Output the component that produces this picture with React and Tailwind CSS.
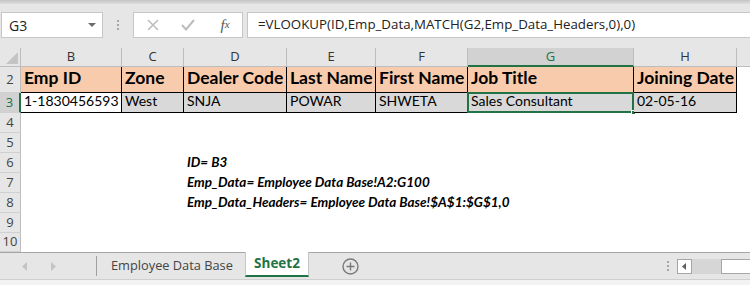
import React from 'react';

const ui = { fontFamily: '"Open Sans", "Noto Sans", sans-serif' };
const cell = { fontFamily: 'Lato, "Liberation Sans", sans-serif' };

const cols = [
  { key: 'B', w: 'w-[101px]', head: 'Emp ID', val: '1-1830456593' },
  { key: 'C', w: 'w-[62px]', head: 'Zone', val: 'West' },
  { key: 'D', w: 'w-[103px]', head: 'Dealer Code', val: 'SNJA' },
  { key: 'E', w: 'w-[89px]', head: 'Last Name', val: 'POWAR' },
  { key: 'F', w: 'w-[92px]', head: 'First Name', val: 'SHWETA' },
  { key: 'G', w: 'w-[166px]', head: 'Job Title', val: 'Sales Consultant' },
  { key: 'H', w: 'w-[103px]', head: 'Joining Date', val: '02-05-16' },
];

const notes = {
  6: 'ID= B3',
  7: 'Emp_Data= Employee Data Base!A2:G100',
  8: 'Emp_Data_Headers= Employee Data Base!$A$1:$G$1,0',
};

const RowHead = ({ n, active, h = 'h-[20px]' }) => (
  <div
    className={`w-[21px] shrink-0 ${h} flex items-center justify-center text-[13px] border-b border-[#d0d0d0] ${
      active ? 'bg-[#d2d2d2] text-[#217346] border-r-2 border-r-[#217346]' : 'bg-[#e6e6e6] text-[#444] border-r border-r-[#bdbdbd]'
    }`}
    style={ui}
  >
    {n}
  </div>
);

const FormulaBar = () => (
  <div className="bg-[#e6e6e6]">
    <div className="h-[4px] bg-gradient-to-b from-[#c4c4c4] to-[#dedede]" />
    <div className="h-[44px] flex items-start pt-[8px]" style={ui}>
      <div className="ml-[1px] w-[102px] h-[26px] bg-white border border-[#c6c6c6] flex items-center pl-[7px] pr-[6px] text-[14px] text-[#222]">
        <span className="flex-1">G3</span>
        <svg width="8" height="5" viewBox="0 0 8 5"><path d="M0 0h8L4 4z" fill="#6b6b6b" /></svg>
      </div>
      <div className="w-[30px] h-[26px] flex flex-col items-center justify-center gap-[2px]">
        <span className="w-[2px] h-[2px] bg-[#a6a6a6]" />
        <span className="w-[2px] h-[2px] bg-[#a6a6a6]" />
        <span className="w-[2px] h-[2px] bg-[#a6a6a6]" />
      </div>
      <div className="w-[110px] h-[26px] bg-white border border-[#c6c6c6] flex items-center">
        <div className="w-[37px] flex justify-center">
          <svg width="12" height="12" viewBox="0 0 12 12"><path d="M1 1l10 10M11 1L1 11" stroke="#bdbdbd" strokeWidth="1.6" /></svg>
        </div>
        <div className="w-[33px] flex justify-center">
          <svg width="14" height="12" viewBox="0 0 14 12"><path d="M1 6l4 4.5L13 1" stroke="#bdbdbd" strokeWidth="2" fill="none" /></svg>
        </div>
        <div className="flex-1 flex justify-center pl-[4px] text-[15px] italic text-[#555]" style={{ fontFamily: '"Liberation Serif", serif' }}>
          f<span className="text-[11px] translate-y-[2px]">x</span>
        </div>
      </div>
      <div className="ml-[4px] flex-1 h-[26px] bg-white border border-[#c6c6c6] border-r-0 flex items-center pl-[10px] text-[13.3px] text-[#222] whitespace-nowrap overflow-hidden">
        =VLOOKUP(ID,Emp_Data,MATCH(G2,Emp_Data_Headers,0),0)
      </div>
    </div>
  </div>
);

const ColumnHeaders = () => (
  <div className="flex h-[19px]" style={ui}>
    <div className="w-[21px] shrink-0 bg-[#e6e6e6] border-r border-b border-[#bdbdbd] flex items-end justify-end pr-[2px] pb-[2px]">
      <svg width="12" height="12" viewBox="0 0 12 12"><path d="M12 0v12H0z" fill="#c4c4c4" /></svg>
    </div>
    {cols.map((c) => (
      <div
        key={c.key}
        className={`${c.w} shrink-0 flex items-center justify-center text-[13px] border-r border-[#bdbdbd] ${
          c.key === 'G' ? 'bg-[#d2d2d2] text-[#217346] border-b-2 border-b-[#217346]' : 'bg-[#e6e6e6] text-[#333] border-b border-b-[#bdbdbd]'
        }`}
      >
        {c.key}
      </div>
    ))}
    <div className="flex-1 bg-[#e6e6e6] border-b border-[#bdbdbd]" />
  </div>
);

const Grid = () => (
  <div className="bg-white" style={cell}>
    <div className="flex h-[26px]">
      <RowHead n={2} h="h-[26px]" />
      {cols.map((c) => (
        <div
          key={c.key}
          className={`${c.w} shrink-0 bg-[#f8cbad] border-r border-b border-black flex items-end pl-[3px] pb-[1px] text-[17.5px] font-bold text-black whitespace-nowrap overflow-hidden`}
        >
          {c.head}
        </div>
      ))}
      <div className="flex-1" />
    </div>
    <div className="flex h-[20px]">
      <RowHead n={3} active />
      {cols.map((c) => (
        <div
          key={c.key}
          className={`${c.w} shrink-0 relative border-r border-b border-black flex items-end pl-[3px] pb-[1px] text-[14px] text-black whitespace-nowrap ${
            c.key === 'B' ? 'bg-white' : 'bg-[#d9d9d9]'
          }`}
        >
          {c.val}
          {c.key === 'G' && (
            <>
              <div className="absolute -left-[1px] -top-[1px] -right-[1px] -bottom-[1px] border-2 border-[#217346]" />
              <div className="absolute -right-[3px] -bottom-[3px] w-[5px] h-[5px] bg-[#217346] border border-white" />
            </>
          )}
        </div>
      ))}
      <div className="flex-1" />
    </div>
    {[4, 5, 6, 7, 8, 9, 10].map((n) => (
      <div key={n} className={`flex ${n === 10 ? 'h-[19px]' : 'h-[20px]'}`}>
        <RowHead n={n} h={n === 10 ? 'h-[19px]' : 'h-[20px]'} />
        <div className="w-[101px] shrink-0" />
        <div className="w-[62px] shrink-0" />
        <div className="flex-1 flex items-end pl-[3px] pb-[1px] text-[13.5px] font-bold italic text-black whitespace-nowrap">
          {notes[n]}
        </div>
      </div>
    ))}
  </div>
);

const SheetTabs = () => (
  <div style={ui}>
    <div className="h-[27px] bg-[#e6e6e6] border-t border-[#a6a6a6] flex items-stretch">
      <div className="w-[96px] flex items-center">
        <svg className="ml-[22px]" width="6" height="9" viewBox="0 0 6 9"><path d="M5 0v9L0 4.5z" fill="#c4c4c4" /></svg>
        <svg className="ml-[22px]" width="6" height="9" viewBox="0 0 6 9"><path d="M1 0v9l5-4.5z" fill="#c4c4c4" /></svg>
      </div>
      <div className="w-[1px] my-[3px] bg-[#a0a0a0]" />
      <div className="w-[148px] flex items-center pl-[14px] text-[12.8px] text-[#444]">Employee Data Base</div>
      <div className="w-[64px] -mt-[1px] bg-white border-x border-[#c6c6c6] border-b-2 border-b-[#217346] mb-[2px] flex items-center justify-center text-[13.5px] font-bold text-[#217346]">
        Sheet2
      </div>
      <div className="w-[82px] flex items-center justify-center">
        <svg width="17" height="17" viewBox="0 0 17 17">
          <circle cx="8.5" cy="8.5" r="7.5" stroke="#7a7a7a" strokeWidth="1.4" fill="none" />
          <path d="M8.5 4.5v8M4.5 8.5h8" stroke="#7a7a7a" strokeWidth="1.4" />
        </svg>
      </div>
      <div className="flex-1" />
      <div className="w-[16px] flex flex-col items-center justify-center gap-[2px]">
        <span className="w-[2px] h-[2px] bg-[#a6a6a6]" />
        <span className="w-[2px] h-[2px] bg-[#a6a6a6]" />
        <span className="w-[2px] h-[2px] bg-[#a6a6a6]" />
      </div>
      <div className="w-[74px] flex items-center pl-[1px]">
        <div className="w-[15px] h-[15px] bg-white border border-[#a6a6a6] flex items-center justify-center">
          <svg width="5" height="7" viewBox="0 0 5 7"><path d="M4 0v7L0 3.5z" fill="#606060" /></svg>
        </div>
        <div className="w-[29px] h-[15px] bg-[#d6d6d6]" />
        <div className="flex-1 h-[15px] bg-white border border-[#a6a6a6] border-r-0" />
      </div>
    </div>
    <div className="h-[6px] bg-[#f3f3f3] border-t border-[#cfcfcf]" />
  </div>
);

export default function App() {
  return (
    <div className="w-[750px] h-[285px] overflow-hidden bg-white">
      <FormulaBar />
      <ColumnHeaders />
      <Grid />
      <SheetTabs />
    </div>
  );
}
